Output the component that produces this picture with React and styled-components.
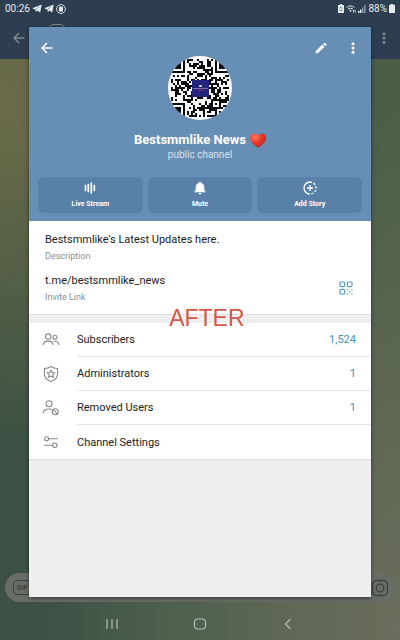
import styled, { createGlobalStyle } from "styled-components";

const QR_SIZE = 29;

const inFinder = (x, y) => {
   const edge = QR_SIZE - 8;
   return (x < 8 && y < 8) || (x >= edge && y < 8) || (x < 8 && y >= edge);
};

const isDark = (x, y) => {
   if (inFinder(x, y)) {
      const fx = x < 8 ? x : QR_SIZE - 1 - x;
      const fy = y < 8 ? y : QR_SIZE - 1 - y;
      if (fx > 6 || fy > 6) return false;
      const ring = Math.max(Math.abs(fx - 3), Math.abs(fy - 3));
      return ring !== 2;
   }
   const align = Math.max(Math.abs(x - 22), Math.abs(y - 22));
   if (align <= 2) return align !== 1;
   let n = Math.imul(x * 31 + y * 977 + 7, 2654435761);
   n = Math.imul(n ^ (n >>> 15), 2246822519);
   n ^= n >>> 13;
   return (n >>> 0) % 100 < 52;
};

const qrPath = () => {
   let d = "";
   for (let y = 0; y < QR_SIZE; y++) {
      for (let x = 0; x < QR_SIZE; x++) {
         if (isDark(x, y)) d += `M${x} ${y}h1v1h-1z`;
      }
   }
   return d;
};

const QrAvatar = () => (
   <svg viewBox="0 0 64 64" width="64" height="64" role="img" aria-label="Channel photo">
      <rect width="64" height="64" fill="#fff" />
      <path d={qrPath()} fill="#0b0b0f" transform="translate(3 3) scale(2)" />
      <rect x="24" y="24" width="17" height="17" fill="#23247c" />
      <rect x="31" y="29" width="3" height="2" rx="1" fill="#d5d6f2" />
      <path d="M25 32.500h15" stroke="#8a83b8" strokeWidth="0.800" />
      <path d="M30 34h6" stroke="#a33564" strokeWidth="0.800" />
   </svg>
);

const BackIcon = () => (
   <svg viewBox="0 0 12 12" width="12" height="12" fill="none" stroke="currentColor" strokeWidth="1.500">
      <path d="M11.500 6H1.200M6 1 1 6l5 5" />
   </svg>
);

const DotsIcon = () => (
   <svg viewBox="0 0 4 12" width="4" height="12" fill="currentColor">
      <circle cx="2" cy="1.800" r="1.500" />
      <circle cx="2" cy="6" r="1.500" />
      <circle cx="2" cy="10.200" r="1.500" />
   </svg>
);

const PencilIcon = () => (
   <svg viewBox="0 0 12 12" width="12" height="12" fill="currentColor">
      <path d="M.6 9.200 7.400 2.600 9.500 4.700 2.800 11.200H.6zM8.100 1.900 9.200.9q.5-.4 1 0l1.200 1.200q.4.500 0 1L10.200 4z" />
   </svg>
);

const HeartIcon = () => (
   <svg viewBox="0 0 16 15" width="16" height="15" role="img" aria-label="heart">
      <defs>
         <radialGradient id="heart" cx="0.300" cy="0.250" r="0.800">
            <stop offset="0" stopColor="#ff7a61" />
            <stop offset="0.500" stopColor="#ec3b2b" />
            <stop offset="1" stopColor="#b8221d" />
         </radialGradient>
      </defs>
      <path d="M8 14.800C5 12.300 0 9.400 0 4.900 0 2.300 1.900.5 4.200.5 6 .5 7.400 1.600 8 3 8.600 1.600 10 .5 11.800.5 14.100.5 16 2.300 16 4.900c0 4.500-5 7.400-8 9.900z" fill="url(#heart)" />
   </svg>
);

const TelegramIcon = () => (
   <svg viewBox="0 0 10 9" width="10" height="9" fill="currentColor">
      <path d="M.2 4.300 9.700.4 8.200 8.600 5.400 6.600 4 8 3.200 5.600z" />
      <path d="M3.500 5.600 7.200 2.700" stroke="#2c3e50" strokeWidth="0.500" />
   </svg>
);

const RecordIcon = () => (
   <svg viewBox="0 0 10 10" width="10" height="10" fill="none" stroke="currentColor">
      <circle cx="5" cy="5" r="4.400" strokeWidth="0.900" />
      <rect x="3" y="2.400" width="4" height="5.200" rx="0.600" fill="currentColor" stroke="none" />
   </svg>
);

const SaverIcon = () => (
   <svg viewBox="0 0 6 9" width="6" height="9">
      <path d="M2 0h2v1h2v8H0V1h2z" fill="currentColor" />
      <path d="M1.600 4.200a1.500 1.500 0 0 1 2.600.2M4.300 6a1.500 1.500 0 0 1-2.600-.2" stroke="#2c3e50" strokeWidth="0.800" fill="none" />
   </svg>
);

const WifiIcon = () => (
   <svg viewBox="0 0 10 8" width="10" height="8" fill="none" stroke="currentColor" strokeWidth="1">
      <path d="M.6 2.500Q4.500-.6 8.400 2.500M2 4.200Q4.500 2.200 7 4.200" />
      <path d="M3.200 5.400Q4.500 4.600 5.800 5.400L4.500 7z" fill="currentColor" stroke="none" />
      <path d="M7.500 7.500V5M9.200 5v2.500" strokeWidth="0.900" />
   </svg>
);

const SignalIcon = () => (
   <svg viewBox="0 0 8 8" width="8" height="8" fill="currentColor">
      <path d="M0 6h1.500v2H0zM2 4.500h1.500V8H2z" />
      <path d="M4 2.500h1.500V8H4zM6 0h1.600v8H6z" opacity="0.500" />
   </svg>
);

const BatteryIcon = () => (
   <svg viewBox="0 0 6 9" width="6" height="9" fill="currentColor">
      <path d="M1.500 0h3v1H6v8H0V1h1.500z" />
   </svg>
);

const StreamIcon = () => (
   <svg viewBox="0 0 14 14" width="14" height="14" fill="none" stroke="currentColor" strokeWidth="1.700" strokeLinecap="round">
      <path d="M2.500 4.500v5M5.300 3.500v7M8.300 2v10M11.300 4.500v5" />
   </svg>
);

const BellIcon = () => (
   <svg viewBox="0 0 14 14" width="14" height="14" fill="currentColor">
      <path d="M7 .8c.7 0 1.100.5 1.100 1.100C10.200 2.400 11.300 4 11.300 6.200v3l1.300 1.300v.8H1.400v-.8l1.300-1.300v-3c0-2.200 1.100-3.800 3.200-4.300C5.900 1.300 6.300.8 7 .8zM5.600 12h2.800c0 .8-.6 1.400-1.400 1.400S5.600 12.800 5.600 12z" />
   </svg>
);

const StoryIcon = () => (
   <svg viewBox="0 0 14 14" width="14" height="14" fill="none" stroke="currentColor" strokeWidth="1.300">
      <path d="M7 13A6 6 0 0 1 7 1" />
      <path d="M7 1A6 6 0 0 1 7 13" strokeDasharray="2.200 1.500" />
      <path d="M7 4v6M4 7h6" />
   </svg>
);

const LinkQrIcon = () => (
   <svg viewBox="0 0 14 14" width="14" height="14" fill="none" stroke="currentColor" strokeWidth="1.200">
      <rect x="1" y="1" width="4.600" height="4.600" rx="1" />
      <rect x="8.400" y="1" width="4.600" height="4.600" rx="1" />
      <rect x="1" y="8.400" width="4.600" height="4.600" rx="1" />
      <path d="M7.800 8.600H9.200M12.200 8.600h1.300M10 10.700h1.400M7.800 12.900h1.400M12.200 12.900h1.300" strokeWidth="1.400" />
   </svg>
);

const lineIcon = {
   viewBox: "0 0 18 18",
   width: 18,
   height: 18,
   fill: "none",
   stroke: "currentColor",
   strokeWidth: 1.1,
   strokeLinecap: "round",
};

const UsersIcon = () => (
   <svg {...lineIcon}>
      <circle cx="6.200" cy="5.600" r="2.700" />
      <circle cx="13" cy="6.200" r="2" />
      <path d="M1.200 13.800c.3-2.600 2.300-3.700 5-3.700s4.700 1.100 5 3.700M12.200 10.300c2.700-.3 4.300 1 4.700 3.200" />
   </svg>
);

const ShieldIcon = () => (
   <svg {...lineIcon}>
      <path d="M9 1.500c2 1.400 4 2 6.600 2.100v5.200c0 3.700-2.800 6.400-6.600 7.800-3.800-1.400-6.600-4.100-6.600-7.800V3.600C5 3.500 7 2.900 9 1.500z" />
      <path d="m9 5.200 1.200 2.300 2.600.4-1.900 1.800.5 2.600L9 11.100l-2.400 1.200.5-2.600-1.900-1.800 2.600-.4z" strokeLinejoin="round" />
   </svg>
);

const RemovedIcon = () => (
   <svg {...lineIcon}>
      <circle cx="7" cy="4.800" r="3" />
      <path d="M1.200 14c.3-2.900 2.500-4 5.800-4q1.400 0 2.400.3" />
      <circle cx="13.200" cy="12.800" r="3" />
      <path d="m11.200 10.700 4 4.200" />
   </svg>
);

const SettingsIcon = () => (
   <svg {...lineIcon}>
      <circle cx="4.600" cy="5.800" r="2" />
      <path d="M6.800 5.800h8.600M2.400 12.200h7.800" />
      <circle cx="12.800" cy="12.200" r="2.200" />
   </svg>
);

const CameraIcon = () => (
   <svg viewBox="0 0 18 18" width="18" height="18" fill="none" stroke="currentColor" strokeWidth="1.300">
      <rect x="1.500" y="1.500" width="15" height="15" rx="4" />
      <circle cx="9" cy="9" r="3.800" />
   </svg>
);

const navIcon = {
   viewBox: "0 0 14 14",
   width: 14,
   height: 14,
   fill: "none",
   stroke: "currentColor",
   strokeWidth: 1.2,
};

const actions = [
   { label: "Live Stream", icon: <StreamIcon /> },
   { label: "Mute", icon: <BellIcon /> },
   { label: "Add Story", icon: <StoryIcon /> },
];

const rows = [
   { label: "Subscribers", value: "1,524", icon: <UsersIcon /> },
   { label: "Administrators", value: "1", icon: <ShieldIcon /> },
   { label: "Removed Users", value: "1", icon: <RemovedIcon /> },
   { label: "Channel Settings", icon: <SettingsIcon /> },
];

const App = () => {
   return (
      <Screen>
         <GlobalStyle />
         <StatusBar>
            <span>00:26</span>
            <TelegramIcon />
            <TelegramIcon />
            <RecordIcon />
            <Spacer />
            <SaverIcon />
            <WifiIcon />
            <SignalIcon />
            <span>88%</span>
            <BatteryIcon />
         </StatusBar>
         <ChatBar>
            <IconButton aria-label="Back to chats">
               <BackIcon />
            </IconButton>
            <ChatPhoto />
            <Spacer />
            <IconButton aria-label="Chat menu">
               <DotsIcon />
            </IconButton>
         </ChatBar>
         <Spacer />
         <Composer>
            <GifButton>GIF</GifButton>
            <IconButton aria-label="Camera">
               <CameraIcon />
            </IconButton>
         </Composer>
         <NavBar>
            <IconButton aria-label="Recent apps">
               <svg {...navIcon}>
                  <path d="M2 2v10M7 2v10M12 2v10" />
               </svg>
            </IconButton>
            <IconButton aria-label="Home">
               <svg {...navIcon}>
                  <rect x="1.500" y="2" width="11" height="10" rx="3.200" />
               </svg>
            </IconButton>
            <IconButton aria-label="Back">
               <svg {...navIcon}>
                  <path d="M9.500 2 4.500 7l5 5" />
               </svg>
            </IconButton>
         </NavBar>

         <Dialog role="dialog" aria-label="Channel info">
            <Header>
               <Toolbar>
                  <IconButton aria-label="Close">
                     <BackIcon />
                  </IconButton>
                  <Avatar>
                     <QrAvatar />
                  </Avatar>
                  <Tools>
                     <IconButton aria-label="Edit">
                        <PencilIcon />
                     </IconButton>
                     <IconButton aria-label="More">
                        <DotsIcon />
                     </IconButton>
                  </Tools>
               </Toolbar>
               <Name>
                  Bestsmmlike News <HeartIcon />
               </Name>
               <Kind>public channel</Kind>
               <Actions>
                  {actions.map((a) => (
                     <ActionButton key={a.label}>
                        {a.icon}
                        {a.label}
                     </ActionButton>
                  ))}
               </Actions>
            </Header>
            <Info>
               <Field>
                  <FieldText>Bestsmmlike's Latest Updates here.</FieldText>
                  <FieldLabel>Description</FieldLabel>
               </Field>
               <LinkRow>
                  <Field>
                     <FieldLink href="#invite">t.me/bestsmmlike_news</FieldLink>
                     <FieldLabel>Invite Link</FieldLabel>
                  </Field>
                  <QrButton aria-label="Show QR code">
                     <LinkQrIcon />
                  </QrButton>
               </LinkRow>
            </Info>
            <Divider>
               <Caption>AFTER</Caption>
            </Divider>
            <List>
               {rows.map((r) => (
                  <Row key={r.label}>
                     {r.icon}
                     <RowBody>
                        <span>{r.label}</span>
                        {r.value && <Value>{r.value}</Value>}
                     </RowBody>
                  </Row>
               ))}
            </List>
         </Dialog>
      </Screen>
   );
};

const GlobalStyle = createGlobalStyle`
   * {
      box-sizing: border-box;
   }

   body {
      margin: 0;
      font-family: Roboto, "Liberation Sans", sans-serif;
   }

   button {
      font-family: inherit;
      border: none;
      background: none;
      padding: 0;
      cursor: pointer;
   }

   svg {
      display: block;
      flex-shrink: 0;
   }
`;

const Screen = styled.div`
   position: relative;
   display: flex;
   flex-direction: column;
   min-height: 100vh;
   background:
      radial-gradient(ellipse at 0% 16%, #6c6d48 0%, transparent 45%),
      radial-gradient(ellipse at 100% 98%, #6a6e5c 0%, transparent 60%),
      linear-gradient(90deg, #3c5144 0%, #425a48 55%, #4c5e45 100%);
`;

const Spacer = styled.div`
   flex: 1;
`;

const StatusBar = styled.div`
   display: flex;
   align-items: center;
   gap: 2px;
   height: 17px;
   padding: 0 5px;
   font-size: 10px;
   color: #e6ebef;
   background: #2c3e50;
`;

const IconButton = styled.button`
   display: flex;
   align-items: center;
   justify-content: center;
   min-width: 18px;
   height: 24px;
   color: inherit;
`;

const ChatBar = styled.div`
   display: flex;
   align-items: center;
   gap: 20px;
   height: 42px;
   padding: 0 7px 0 10px;
   color: #7d8993;
   background: #2c3e50;
`;

const ChatPhoto = styled.div`
   width: 18px;
   height: 28px;
   border: 1px solid #7d8993;
   border-radius: 6px;
`;

const Composer = styled.div`
   display: flex;
   align-items: center;
   justify-content: space-between;
   height: 29px;
   margin: 0 5px;
   padding: 0 6px 0 8px;
   border-radius: 15px;
   color: #3c423e;
   background: #686d66;
`;

const GifButton = styled.button`
   width: 18px;
   height: 15px;
   && {
      border: 1px solid #3c423e;
   }
   border-radius: 4px;
   font-size: 7px;
   font-weight: 700;
   color: #3c423e;
`;

const NavBar = styled.nav`
   display: grid;
   grid-template-columns: repeat(3, 1fr);
   height: 38px;
   padding: 10px 17%;
   color: #b4bdb5;
`;

/* floats over the dimmed chat */
const Dialog = styled.section`
   position: absolute;
   inset: 27px 29px 43px;
   display: flex;
   flex-direction: column;
   background: #efefef;
   box-shadow: 0 1px 4px rgba(0, 0, 0, 0.5);
`;

const Header = styled.header`
   display: flex;
   flex-direction: column;
   align-items: center;
   padding: 9px 9px 8px;
   color: #fff;
   background: #678eb5;
`;

const Toolbar = styled.div`
   display: grid;
   grid-template-columns: 1fr auto 1fr;
   width: 100%;
   justify-items: start;
`;

const Avatar = styled.div`
   width: 64px;
   height: 64px;
   margin-top: 20px;
   border-radius: 50%;
   overflow: hidden;
`;

const Tools = styled.div`
   display: flex;
   gap: 14px;
   justify-self: end;
`;

const Name = styled.h1`
   display: flex;
   align-items: center;
   gap: 4px;
   margin: 11px 0 0;
   font-size: 13px;
   font-weight: 700;
   line-height: 18px;
`;

const Kind = styled.p`
   margin: 0;
   font-size: 10px;
   line-height: 12px;
   color: #d3e3f2;
`;

const Actions = styled.div`
   display: grid;
   grid-template-columns: repeat(3, 1fr);
   gap: 5px;
   width: 100%;
   margin-top: 16px;
`;

const ActionButton = styled.button`
   display: flex;
   flex-direction: column;
   align-items: center;
   gap: 4px;
   height: 36px;
   && {
      padding-top: 4px;
      background: #5980a8;
   }
   border-radius: 6px;
   font-size: 7px;
   font-weight: 700;
   line-height: 10px;
   color: #fff;
`;

const Info = styled.div`
   display: flex;
   flex-direction: column;
   gap: 11px;
   padding: 11px 16px;
   background: #fff;
`;

const Field = styled.div`
   display: flex;
   flex-direction: column;
   gap: 2px;
`;

const FieldText = styled.span`
   font-size: 11px;
   line-height: 16px;
   color: #222;
`;

const FieldLink = styled.a`
   font-size: 11px;
   line-height: 16px;
   color: #222;
   text-decoration: none;
`;

const FieldLabel = styled.span`
   font-size: 9px;
   line-height: 12px;
   color: #8a8d90;
`;

const LinkRow = styled.div`
   display: flex;
   align-items: center;
   justify-content: space-between;
`;

const QrButton = styled(IconButton)`
   color: #5b9dbb;
`;

const Divider = styled.div`
   position: relative;
   height: 9px;
   border-top: 1px solid #e0e0e0;
`;

/* stamped across the gap between the two cards */
const Caption = styled.strong`
   position: absolute;
   top: -11px;
   left: 52%;
   transform: translateX(-50%);
   font-family: "Liberation Sans", Arial, sans-serif;
   font-size: 23px;
   font-weight: 400;
   line-height: 28px;
   color: #d25a48;
`;

const List = styled.div`
   display: flex;
   flex-direction: column;
   background: #fff;
   border-bottom: 1px solid #dcdcdc;
`;

const Row = styled.button`
   display: flex;
   align-items: center;
   gap: 17px;
   height: 34px;
   && {
      padding-left: 13px;
   }
   color: #85888b;
`;

const RowBody = styled.span`
   display: flex;
   flex: 1;
   align-items: center;
   justify-content: space-between;
   height: 34px;
   padding-right: 15px;
   border-bottom: 1px solid #e4e4e4;
   font-size: 11px;
   color: #222;

   ${Row}:last-child & {
      border-bottom: none;
   }
`;

const Value = styled.span`
   color: #4295ae;
`;

export default App;
